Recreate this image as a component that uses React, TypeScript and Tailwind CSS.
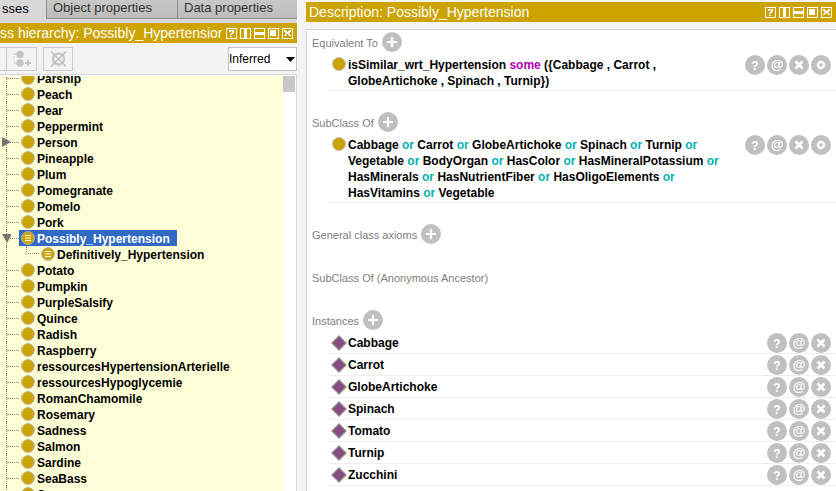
import type { ReactNode } from 'react';

type TreeRow = {
  name: string;
  state?: 'open' | 'closed';
  child?: boolean;
  defined?: boolean;
  selected?: boolean;
};

const tree: TreeRow[] = [
  { name: 'Parsnip' },
  { name: 'Peach' },
  { name: 'Pear' },
  { name: 'Peppermint' },
  { name: 'Person', state: 'closed' },
  { name: 'Pineapple' },
  { name: 'Plum' },
  { name: 'Pomegranate' },
  { name: 'Pomelo' },
  { name: 'Pork' },
  { name: 'Possibly_Hypertension', state: 'open', defined: true, selected: true },
  { name: 'Definitively_Hypertension', child: true, defined: true },
  { name: 'Potato' },
  { name: 'Pumpkin' },
  { name: 'PurpleSalsify' },
  { name: 'Quince' },
  { name: 'Radish' },
  { name: 'Raspberry' },
  { name: 'ressourcesHypertensionArterielle' },
  { name: 'ressourcesHypoglycemie' },
  { name: 'RomanChamomile' },
  { name: 'Rosemary' },
  { name: 'Sadness' },
  { name: 'Salmon' },
  { name: 'Sardine' },
  { name: 'SeaBass' },
  { name: 'Sesame' },
];

const instances = ['Cabbage', 'Carrot', 'GlobeArtichoke', 'Spinach', 'Tomato', 'Turnip', 'Zucchini'];

const superClassLines = [
  ['Cabbage', 'Carrot', 'GlobeArtichoke', 'Spinach', 'Turnip'],
  ['Vegetable', 'BodyOrgan', 'HasColor', 'HasMineralPotassium'],
  ['HasMinerals', 'HasNutrientFiber', 'HasOligoElements'],
  ['HasVitamins', 'Vegetable'],
];

function ClassIcon({ defined = false }: { defined?: boolean }) {
  return (
    <svg width="14" height="14" viewBox="0 0 14 14" className="shrink-0" aria-hidden="true">
      <circle cx="7" cy="7" r="6.4" fill="#cca300" stroke="#b9b5b0" strokeWidth="1" />
      {defined && (
        <path d="M4 4.5h6M4 7h6M4 9.5h6" stroke="#fff" strokeWidth="1" fill="none" />
      )}
    </svg>
  );
}

function IndividualIcon() {
  return (
    <svg width="16" height="16" viewBox="0 0 16 16" className="shrink-0" aria-hidden="true">
      <path d="M8 1L15 8L8 15L1 8Z" fill="#874b82" stroke="#8a8a8a" strokeWidth="1.4" strokeLinejoin="round" />
    </svg>
  );
}

const windowIcons: { label: string; shape: ReactNode }[] = [
  {
    label: 'Help',
    shape: <path d="M3 2h5v1H3zM3 3h2v1H3zM6 3h2v2H6zM5 5h2v1H5zM4 6h2v1H4zM4 8h2v1H4z" />,
  },
  { label: 'Split vertically', shape: <path d="M4 1h3v9H4z" /> },
  { label: 'Split horizontally', shape: <path d="M1 4h9v3H1z" /> },
  { label: 'Float', shape: <path d="M2 2h6v6H2z" /> },
  {
    label: 'Close',
    shape: <path d="M2 2h2v1h1v1h1V3h1V2h2v2H8v1H7v1h1v1h1v1H7V7H6V6H5v1H4v1H2V7h1V6h1V5H3V4H2z" />,
  },
];

function TitleBar({ title }: { title: string }) {
  return (
    <header className="flex h-5 shrink-0 items-center gap-1 bg-[#cca300] pr-1 text-white">
      <h2 className="min-w-0 flex-1 overflow-hidden whitespace-nowrap text-[14px] leading-5">{title}</h2>
      <div className="flex gap-[3px]">
        {windowIcons.map((icon) => (
          <button key={icon.label} type="button" aria-label={icon.label} className="block">
            <svg width="11" height="11" viewBox="0 0 11 11" shapeRendering="crispEdges" fill="#fff">
              <path d="M0 0h11v11H0zM1 1v9h9V1z" fillRule="evenodd" />
              {icon.shape}
            </svg>
          </button>
        ))}
      </div>
    </header>
  );
}

const glyphs = {
  add: { label: 'Add', shape: <path d="M10 5v10M5 10h10" stroke="#fff" strokeWidth="2.2" /> },
  help: {
    label: 'Explain',
    shape: (
      <text x="10" y="15" textAnchor="middle" fontSize="12" fontWeight="700" fill="#fff">?</text>
    ),
  },
  annotate: {
    label: 'Annotate',
    shape: (
      <text x="10" y="14" textAnchor="middle" fontSize="13" fontWeight="700" fill="#fff">@</text>
    ),
  },
  remove: { label: 'Remove', shape: <path d="M6.5 6.5l7 7M13.5 6.5l-7 7" stroke="#fff" strokeWidth="2.6" /> },
  edit: { label: 'Edit', shape: <circle cx="10" cy="10" r="3" fill="none" stroke="#fff" strokeWidth="2.4" /> },
};

function RoundButton({ kind, subject }: { kind: keyof typeof glyphs; subject: string }) {
  const glyph = glyphs[kind];
  return (
    <button type="button" aria-label={`${glyph.label} ${subject}`} className="block size-5 shrink-0">
      <svg width="20" height="20" viewBox="0 0 20 20">
        <circle cx="10" cy="10" r="10" fill="#c0c0c0" />
        {glyph.shape}
      </svg>
    </button>
  );
}

function Section({ title, addable = true, children }: { title: string; addable?: boolean; children?: ReactNode }) {
  return (
    <section>
      <div className="flex h-6 items-center gap-1 pl-[5px]">
        <h3 className="pt-0.5 text-[11px] text-[#808080]">{title}</h3>
        {addable && <RoundButton kind="add" subject={title} />}
      </div>
      {children}
    </section>
  );
}

function AxiomRow({ name, children }: { name: string; children: ReactNode }) {
  return (
    <div className="ml-[21px] flex items-start border-b border-[#eeeeee] pb-px pl-1">
      <div className="pt-[3px]">
        <ClassIcon />
      </div>
      <div className="min-w-0 flex-1 whitespace-nowrap pl-0.5 pt-[3px] font-bold leading-4">{children}</div>
      <div className="flex gap-0.5 pr-[5px] pt-px">
        <RoundButton kind="help" subject={name} />
        <RoundButton kind="annotate" subject={name} />
        <RoundButton kind="remove" subject={name} />
        <RoundButton kind="edit" subject={name} />
      </div>
    </div>
  );
}

function TreeItem({ row }: { row: TreeRow }) {
  return (
    <li className="relative ml-1.5 flex h-4 items-center border-l border-dotted border-[#808080]">
      {row.state && (
        <svg width="10" height="10" viewBox="0 0 10 10" className="absolute -left-1.5 top-[3px]" fill="#757575" aria-hidden="true">
          <path d={row.state === 'closed' ? 'M1 0v10l9-5z' : 'M1 1h10l-5 9z'} />
        </svg>
      )}
      {row.child ? (
        <span className="ml-[19px] h-2 w-[13px] self-start border-b border-l border-dotted border-[#808080]" />
      ) : (
        <span className="h-px w-3 border-t border-dotted border-[#808080]" />
      )}
      <span className={`flex h-4 items-center gap-0.5 pl-0.5 ${row.selected ? 'bg-[#316ac5] pr-[7px] text-white' : ''}`}>
        <ClassIcon defined={row.defined} />
        <span className="pt-px">{row.name}</span>
      </span>
    </li>
  );
}

function Hierarchy() {
  return (
    <aside className="flex w-[297px] shrink-0 flex-col">
      <nav className="flex h-[23px] shrink-0 bg-[#d8d8d8] text-[13px] leading-4 text-[#333]">
        <button type="button" className="h-[19px] w-[46px] pb-0.5 pl-0.5 text-left text-black">sses</button>
        <button type="button" className="h-[19px] w-[131px] border-b border-l border-[#8e8e8e] bg-linear-to-b from-[#c8c8c8] to-[#bcbcbc] pb-0.5 pl-1.5 text-left">
          Object properties
        </button>
        <button type="button" className="h-[19px] flex-1 border-b border-l border-[#8e8e8e] bg-linear-to-b from-[#c8c8c8] to-[#bcbcbc] pb-0.5 pl-1.5 text-left">
          Data properties
        </button>
      </nav>
      <TitleBar title="ss hierarchy: Possibly_Hypertension" />
      <div className="flex h-8 shrink-0 items-center border-b border-[#d8d8d8] pt-px">
        <button type="button" aria-label="Add subclass" className="h-6 w-[7px] border border-l-0 border-[#cccccc]" />
        <button type="button" aria-label="Add sibling class" className="flex h-6 w-[30px] items-center justify-center border border-l-0 border-[#cccccc]">
          <svg width="18" height="18" viewBox="0 0 18 18">
            <path d="M5 4H1V13.5H5" fill="none" stroke="#c4c4c4" strokeDasharray="1 1" />
            <circle cx="7" cy="4.5" r="3.8" fill="#c4c4c4" />
            <circle cx="7" cy="13" r="3.8" fill="#c4c4c4" />
            <path d="M15 10v6M12 13h6" stroke="#c4c4c4" strokeWidth="2" />
          </svg>
        </button>
        <button type="button" aria-label="Delete class" className="ml-1.5 flex h-6 w-[30px] items-center justify-center border border-[#cccccc]">
          <svg width="17" height="16" viewBox="0 0 17 16">
            <circle cx="8.5" cy="8" r="5.5" fill="none" stroke="#c8c8c8" strokeWidth="2.4" />
            <path d="M1 .5l15 15M16 .5L1 15.5" stroke="#bcbcbc" strokeWidth="1.4" />
          </svg>
        </button>
        <div className="relative ml-auto">
          <select aria-label="Hierarchy kind" defaultValue="Inferred" className="block h-6 w-[69px] appearance-none border border-[#c4c4c4] bg-white text-[12px] text-black">
            <option>Inferred</option>
            <option>Asserted</option>
          </select>
          <svg width="9" height="5" viewBox="0 0 9 5" className="pointer-events-none absolute right-0.5 top-2.5" aria-hidden="true">
            <path d="M0 0h9L4.500 5z" fill="#000" />
          </svg>
        </div>
      </div>
      <div className="flex min-h-0 flex-1 border-r border-[#d8d8d8] bg-white pt-px">
        <div className="min-w-0 flex-1 overflow-hidden bg-[#ffffd7]">
          <ul className="-mt-1.5 font-bold">
            {tree.map((row) => (
              <TreeItem key={row.name} row={row} />
            ))}
          </ul>
        </div>
        <div className="w-[13px]">
          <div className="h-4 w-3 bg-[#c8c8c8]" />
        </div>
      </div>
    </aside>
  );
}

function Description() {
  return (
    <main className="flex min-w-0 flex-1 flex-col gap-[7px] pt-0.5">
      <div className="[&_header]:pl-[3px]">
        <TitleBar title="Description: Possibly_Hypertension" />
      </div>
      <div className="flex min-h-0 flex-1 flex-col gap-[19px] overflow-hidden border-l border-t border-[#d4d4d4] bg-white">
        <Section title="Equivalent To">
          <AxiomRow name="equivalent class">
            <p>
              isSimilar_wrt_Hypertension <span className="text-[#b200b2]">some</span> {'({Cabbage , Carrot ,'}
            </p>
            <p>{'GlobeArtichoke , Spinach , Turnip})'}</p>
          </AxiomRow>
        </Section>
        <Section title="SubClass Of">
          <AxiomRow name="superclass">
            {superClassLines.map((line, lineIndex) => (
              <p key={line[0]}>
                {line.map((name, index) => (
                  <span key={name}>
                    {name}
                    {(lineIndex < superClassLines.length - 1 || index < line.length - 1) && (
                      <span className="text-[#00b2b2]"> or </span>
                    )}
                  </span>
                ))}
              </p>
            ))}
          </AxiomRow>
        </Section>
        <Section title="General class axioms" />
        <Section title="SubClass Of (Anonymous Ancestor)" addable={false} />
        <Section title="Instances">
          <ul className="ml-[21px]">
            {instances.map((name) => (
              <li key={name} className="flex h-[22px] items-center gap-px border-b border-[#eeeeee] pl-[3px] pr-[5px] font-bold">
                <IndividualIcon />
                <span className="flex-1">{name}</span>
                <div className="flex gap-0.5">
                  <RoundButton kind="help" subject={name} />
                  <RoundButton kind="annotate" subject={name} />
                  <RoundButton kind="remove" subject={name} />
                </div>
              </li>
            ))}
          </ul>
        </Section>
      </div>
    </main>
  );
}

export default function App() {
  return (
    <div className="flex h-screen gap-[9px] overflow-hidden bg-[#f3f3f3] font-['Liberation_Sans',Arial,sans-serif] text-[12px] leading-4 text-black">
      <Hierarchy />
      <Description />
    </div>
  );
}
